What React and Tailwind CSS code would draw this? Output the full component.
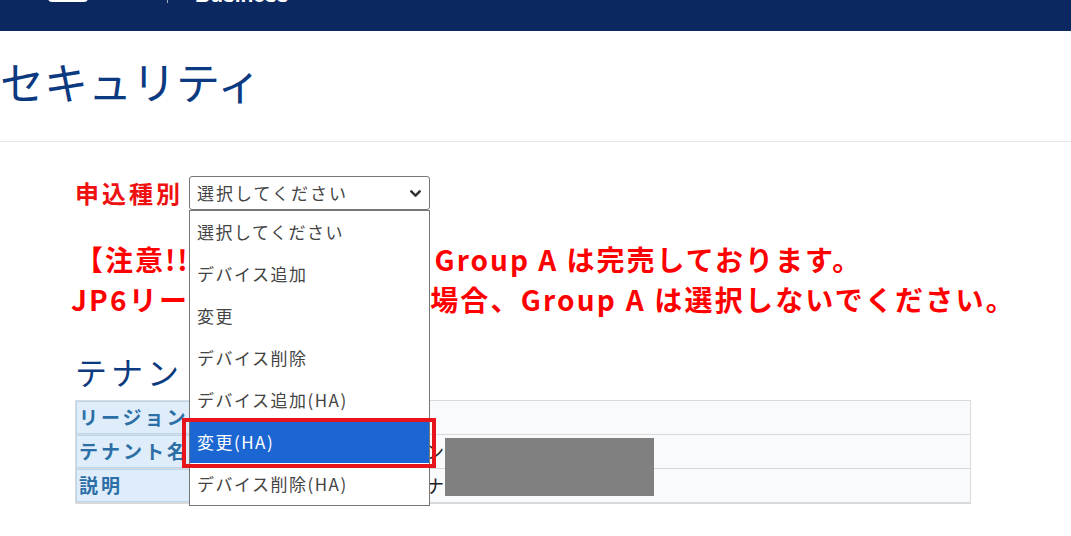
import { ChevronDown } from "lucide-react";

const options = [
  "選択してください",
  "デバイス追加",
  "変更",
  "デバイス削除",
  "デバイス追加(HA)",
  "変更(HA)",
  "デバイス削除(HA)",
];

const tenantRows = [
  { label: "リージョン", value: "" },
  { label: "テナント名", value: "株式会社サンプルグループ" },
  { label: "説明", value: "全社共通テナント" },
];

export default function App() {
  const selected = 5;

  return (
    <div className="min-h-[536px] w-[1071px] overflow-hidden bg-white font-['Noto_Sans_CJK_JP','Noto_Sans',sans-serif]">
      {/* Top Bar */}
      <header className="h-[31px] overflow-hidden bg-[#0b2960]">
        <div className="-mt-[25px] flex h-[30px] items-end">
          <div className="mb-[3px] ml-[48px] h-[8px] w-[40px] rounded-sm bg-white" />
          <div className="mb-[2px] ml-[79px] h-[20px] w-px bg-white/60" />
          <span className="ml-[27px] font-['Liberation_Sans',sans-serif] text-[21px] font-bold leading-none text-white">
            Business
          </span>
        </div>
      </header>

      {/* Page Title */}
      <div className="border-b border-[#e6e6e6] pt-[26px] pb-[36px]">
        <h1 className="text-[44px] leading-[48px] font-normal text-[#0c3a80]">セキュリティ</h1>
      </div>

      <div className="pl-[75px]">
        {/* Application Type */}
        <div className="mt-[34px] flex items-center">
          <span className="w-[114px] text-[24px] leading-[34px] font-bold tracking-[3px] text-[#ee1111]">申込種別</span>
          <div className="relative">
            <div className="flex h-[34px] w-[241px] items-center rounded-[3px] border border-[#767676] pr-[5px] pl-[7px]">
              <span className="text-[17px] tracking-[2px] text-[#444]">選択してください</span>
              <ChevronDown size={17} strokeWidth={3.5} className="ml-auto text-[#333]" />
            </div>

            {/* Open Options */}
            <div className="absolute top-full left-0 z-10 w-[241px] border border-[#767676] bg-white">
              {options.map((o, i) => (
                <div
                  key={o}
                  className={`flex h-[42px] items-center pl-[7px] text-[17px] tracking-[1.5px] ${
                    i === selected ? "bg-[#1b66d2] text-white" : "text-[#444]"
                  }`}
                >
                  {o}
                </div>
              ))}
              <div className="absolute top-[207px] -left-[8px] h-[50px] w-[254px] border-4 border-[#e8141c]" />
            </div>
          </div>
        </div>

        {/* Notice */}
        <div className="mt-[29px] text-[28px] leading-[40px] font-bold tracking-[2px] whitespace-nowrap text-[#ff0000]">
          <p>【注意!!】JP6リージョン Group A は完売しております。</p>
          <p className="-ml-[4px] tracking-[2.2px]">JP6リージョンをご利用の場合、Group A は選択しないでください。</p>
        </div>

        {/* Tenant Info */}
        <h2 className="mt-[32px] text-[32px] leading-[40px] font-normal tracking-[4px] text-[#0c3a80]">テナント情報</h2>

        <div className="relative mt-[9px] w-[896px] border border-[#dadada]">
          {tenantRows.map((r) => (
            <div key={r.label} className="flex h-[34px] border-b border-[#dadada] last:border-b-0">
              <div className="flex w-[250px] items-center border border-[#b9d6ee] bg-[#deedf9] pl-[2px] text-[19px] font-bold tracking-[3px] text-[#2c6fa6]">
                {r.label}
              </div>
              <div className="flex flex-1 items-center bg-[#f9fafc] pl-[10px] text-[18px] whitespace-nowrap text-[#222]">
                {r.value}
              </div>
            </div>
          ))}
          {/* Masked Area */}
          <div className="absolute top-[37px] left-[369px] h-[58px] w-[209px] bg-[#808080]" />
        </div>
      </div>
    </div>
  );
}
